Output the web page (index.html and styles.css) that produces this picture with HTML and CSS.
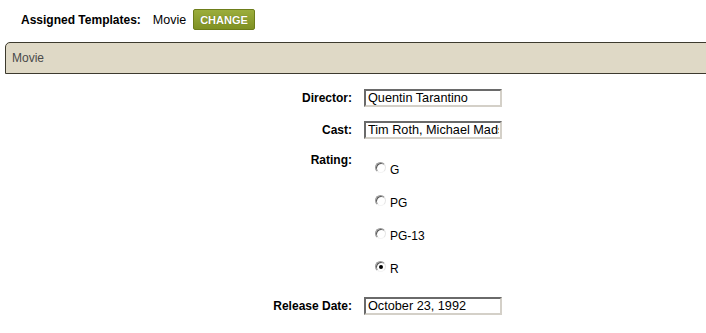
FILE: index.html
```html
<!DOCTYPE html>
<html>
<head>
  <meta name="viewport" content="width=device-width, initial-scale=1">
  <link rel="stylesheet" href="styles.css">
</head>
<body>

<div class="assigned">
  <span class="assigned-label">Assigned Templates:</span>
  <span class="assigned-name">Movie</span>
  <button class="change-btn">CHANGE</button>
</div>

<div class="panel-head">Movie</div>

<div class="fields">
  <div class="field">
    <label class="field-label">Director:</label>
    <input type="text" class="field-input" value="Quentin Tarantino">
  </div>

  <div class="field">
    <label class="field-label">Cast:</label>
    <input type="text" class="field-input" value="Tim Roth, Michael Madsen, Steve Buscemi">
  </div>

  <div class="field field-top">
    <label class="field-label">Rating:</label>
    <div class="options">
      <div class="option"><span class="radio"></span><span class="option-text">G</span></div>
      <div class="option"><span class="radio"></span><span class="option-text">PG</span></div>
      <div class="option"><span class="radio"></span><span class="option-text">PG-13</span></div>
      <div class="option"><span class="radio checked"></span><span class="option-text">R</span></div>
    </div>
  </div>

  <div class="field field-last">
    <label class="field-label">Release Date:</label>
    <input type="text" class="field-input" value="October 23, 1992">
  </div>
</div>

</body>
</html>
```

FILE: styles.css
```css
body {
  font-family: "Liberation Sans", Arial, sans-serif;
  font-size: 12px;
  margin: 0;
  background-color: #fff;
  color: #000;
  overflow: hidden;
}

.assigned {
  display: flex;
  align-items: center;
  height: 21px;
  margin: 9px 0 0 21px;
}

.assigned-label {
  font-weight: bold;
}

.assigned-name {
  margin-left: 12px;
  font-size: 12.5px;
}

.change-btn {
  margin-left: 7px;
  height: 21px;
  padding: 0 6px;
  font-family: "Liberation Sans", Arial, sans-serif;
  font-size: 11px;
  font-weight: bold;
  color: #fff;
  background: linear-gradient(#9bad3c, #7f9123);
  border: 1px solid #6d7d1a;
  border-radius: 2px;
  text-shadow: 0 0 1px #56640f;
}

.panel-head {
  margin: 12px -8px 0 5px;
  height: 30px;
  line-height: 30px;
  padding-left: 6px;
  background-color: #dfd9c6;
  border: 1px solid #3d3a2e;
  border-radius: 5px 5px 0 0;
  color: #4a4a4a;
}

.fields {
  margin-top: 15px;
}

.field {
  display: grid;
  grid-template-columns: 352px 1fr;
  column-gap: 12px;
  align-items: center;
  margin-bottom: 14px;
}

.field-top {
  align-items: start;
  margin-bottom: 12px;
}

.field-label {
  font-weight: bold;
  text-align: right;
  line-height: 15px;
}

.field-input {
  box-sizing: border-box;
  width: 138px;
  height: 18px;
  margin: 0;
  padding: 0 1px 0 2px;
  font-family: "Liberation Sans", Arial, sans-serif;
  font-size: 12.7px;
  color: #000;
  background: #fff;
  border: 2px solid;
  border-color: #6a6a6a #d4d0c8 #d4d0c8 #6a6a6a;
  outline: none;
}

.options {
  display: flex;
  flex-direction: column;
}

.option {
  display: flex;
  align-items: center;
  height: 33px;
  padding-left: 11px;
}

.radio {
  box-sizing: border-box;
  width: 11px;
  height: 11px;
  margin-top: -4px;
  border-radius: 50%;
  border: 1px solid;
  border-color: #9a9a9a #e6e6e6 #f4f4f4 #9a9a9a;
  box-shadow: inset 1px 1px 0 #5a5a5a;
  background: #fff;
  position: relative;
}

.radio.checked::after {
  content: "";
  position: absolute;
  left: 3px;
  top: 3px;
  width: 4px;
  height: 4px;
  border-radius: 50%;
  background: #000;
}

.option-text {
  margin-left: 4px;
}
```
